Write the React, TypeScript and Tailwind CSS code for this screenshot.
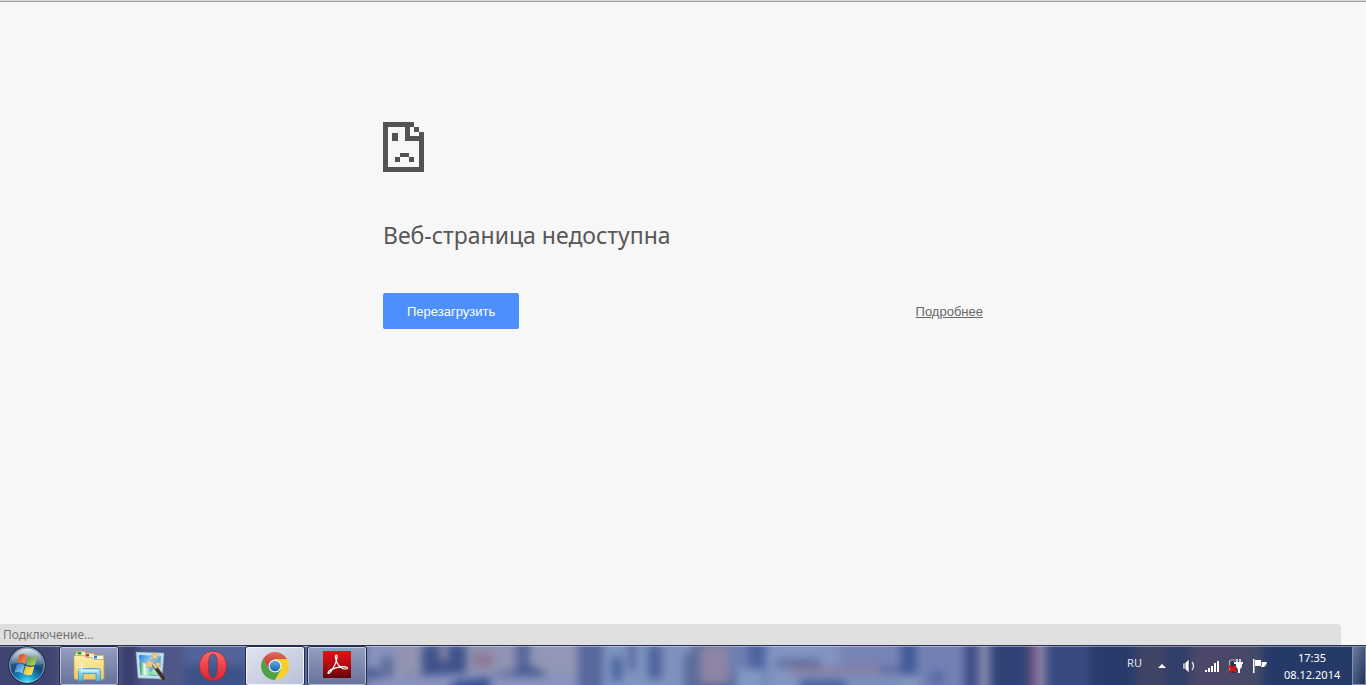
import React from 'react';

type Patch = [x: number, y: number, w: number, h: number, fill: string];

const patches: Patch[] = [
  [-20, -10, 80, 60, '#3f4470'], [118, -10, 70, 60, '#4f5789'], [118, -10, 20, 60, '#39406f'], [185, -10, 62, 30, '#53649a'],
  [185, 20, 62, 30, '#3c5289'], [366, -10, 40, 60, '#8793bd'], [366, 24, 14, 16, '#465790'], [382, 12, 10, 24, '#5b6798'],
  [395, -10, 30, 40, '#9293b0'], [422, 2, 44, 30, '#3e528b'], [440, -10, 8, 26, '#8f89a9'], [466, -10, 50, 40, '#9093b1'],
  [474, 8, 18, 14, '#8c7795'], [516, -10, 14, 40, '#57659b'], [530, -10, 48, 46, '#9297b5'],
  [603, -10, 60, 60, '#8094c0'], [612, 12, 10, 24, '#48649d'], [628, -10, 8, 36, '#5d6da2'], [648, 0, 14, 34, '#4f639d'],
  [663, -10, 30, 60, '#8091bf'], [684, 8, 14, 42, '#5d6b9d'], [700, 0, 30, 38, '#8f85a5'], [728, -10, 20, 36, '#6d7fb0'],
  [736, 24, 28, 26, '#8298c4'], [750, -10, 16, 34, '#4d65a0'], [766, -10, 92, 60, '#8294c1'], [776, 14, 44, 8, '#626f9d'],
  [790, 22, 90, 7, '#8a7c9d'], [800, 34, 46, 16, '#4f639d'], [840, -10, 60, 32, '#7783b5'], [850, 28, 50, 22, '#7d8dbb'],
  [902, -10, 14, 40, '#405b9a'], [916, -10, 48, 60, '#7480b4'], [900, 30, 20, 20, '#8597be'], [930, 26, 14, 14, '#5a6ba4'],
  [964, -10, 14, 60, '#414d88'], [978, -10, 12, 60, '#8087aa'], [991, -10, 38, 60, '#304276'], [1029, -10, 8, 60, '#70587f'],
  [1037, -10, 9, 60, '#8a86ad'], [1046, -10, 44, 60, '#394a80'], [1090, -10, 46, 60, '#283b6b'], [1136, -10, 30, 60, '#404467'],
  [1166, -10, 24, 60, '#303e69'], [1190, -10, 60, 60, '#4b4768'], [1238, -10, 25, 60, '#464966'], [1263, -10, 123, 60, '#263a68'],
];

function Wallpaper() {
  return (
    <svg aria-hidden="true" className="absolute inset-0 h-full w-full" viewBox="0 0 1366 40" preserveAspectRatio="none">
      <defs>
        <filter id="soft" x="-2%" y="-20%" width="104%" height="140%" colorInterpolationFilters="sRGB"><feGaussianBlur stdDeviation="4 4" /></filter>
      </defs>
      <g filter="url(#soft)">
        <rect x="-20" y="-10" width="1406" height="60" fill="#59689d" />
        {patches.map(([x, y, w, h, fill], i) => <rect key={i} x={x} y={y} width={w} height={h} fill={fill} />)}
        <path d="M366 34 450 29 480 28H578V50H366Z" fill="#8993be" />
        <path d="M444 50 455 36 490 32V50Z" fill="#38508f" />
        <path d="M490 31 535 22 548 31Z" fill="#43548f" />
      </g>
    </svg>
  );
}

function SadPage() {
  return (
    <svg width="41" height="50" viewBox="0 0 41 50" shapeRendering="crispEdges" aria-hidden="true">
      <path fill="#535353" fillRule="evenodd" d="M0 0H31V5H36V10H41V50H0ZM5 5V45H36V19H22V5ZM27 5V14H36V10H31V5ZM9 11H15V19H9ZM17 31H26V35H31V40H26V35H17V40H12V35H17Z" />
    </svg>
  );
}

function StartOrb() {
  return (
    <svg width="40" height="40" viewBox="0 0 40 40" aria-hidden="true">
      <defs>
        <radialGradient id="orb" cx=".5" cy=".98" r=".8">
          <stop offset="0" stopColor="#4cecff" /><stop offset=".3" stopColor="#1794c8" /><stop offset=".62" stopColor="#144a7b" /><stop offset="1" stopColor="#4d6583" />
        </radialGradient>
        <linearGradient id="orbShine" x2="0" y2="1"><stop stopColor="#fff" stopOpacity=".85" /><stop offset="1" stopColor="#b8d5ea" stopOpacity=".2" /></linearGradient>
        <linearGradient id="flagRed" x2="1" y2="1"><stop stopColor="#d0401c" /><stop offset="1" stopColor="#f8a05c" /></linearGradient>
        <linearGradient id="flagGreen" x2="1" y2="1"><stop stopColor="#5d9a2d" /><stop offset="1" stopColor="#c0dc69" /></linearGradient>
        <linearGradient id="flagBlue" x2="1" y2="1"><stop stopColor="#2770bd" /><stop offset="1" stopColor="#9edcff" /></linearGradient>
        <linearGradient id="flagYellow" x2="1" y2="1"><stop stopColor="#f0b51d" /><stop offset="1" stopColor="#ffed83" /></linearGradient>
      </defs>
      <circle cx="20" cy="19" r="18.3" fill="url(#orb)" stroke="#15243f" />
      <circle cx="20" cy="19" r="17.3" fill="none" stroke="#a9c7dc" strokeOpacity=".75" />
      <path d="M4 18a16 15.500 0 0 1 32 0C27 22 14 15 4 18Z" fill="url(#orbShine)" />
      <path d="M12.500 8.800c2.800-1.500 5.200-1 7.700.7L18 18c-2.800-1.800-5.200-2-7.900-.7Z" fill="url(#flagRed)" />
      <path d="M21.200 10.300c3 1.800 5.800 1.500 9.200.2l-2.600 8.400c-2.800 1.200-5.800 1-8.800-.4Z" fill="url(#flagGreen)" />
      <path d="M9.800 18.600c2.600-1.500 5-1.200 7.900.5L15.400 27.400c-2.700-1.700-5.200-1.900-8-.6Z" fill="url(#flagBlue)" />
      <path d="M18.700 19.700c3 1.600 5.800 1.600 8.800.4L25 28.400c-2.800 1.200-5.600 1-8.600-.6Z" fill="url(#flagYellow)" />
    </svg>
  );
}

function Explorer() {
  return (
    <svg width="34" height="32" viewBox="0 0 34 32" aria-hidden="true">
      <defs>
        <linearGradient id="folder" x2="0" y2="1"><stop stopColor="#fdf0ad" /><stop offset="1" stopColor="#e8cb66" /></linearGradient>
        <linearGradient id="stand" x2="0" y2="1"><stop stopColor="#b6e4f6" /><stop offset="1" stopColor="#58b0da" /></linearGradient>
      </defs>
      <path d="M4 2q0-1 1-1h8l1 2h8l1 2h8q1 0 1 1v22H3V5Z" fill="#edd98c" stroke="#ae9349" strokeWidth=".7" />
      <path d="M5 2h7l1 3H4Z" fill="#f7f7e7" /><path d="M5.500 2h4v2.500h-4Z" fill="#279b35" />
      <path d="M13 4h7l1 3h-8Z" fill="#f8f3e5" /><path d="M13.500 4h3.500v2.500h-3.500Z" fill="#b83c29" />
      <path d="M21 6h9l1 3H21Z" fill="#f8f8f0" /><path d="M22 6h3v2.500h-3Z" fill="#2a81d0" />
      <path d="M2 5.500h10l2 2h6l2 2h10v18q0 2-2 2H4q-2 0-2-2Z" fill="url(#folder)" stroke="#c0a24c" strokeWidth=".7" />
      <path d="M6.500 31V20.500q0-2 2-2h18q2 0 2 2V31H24v-7.500H11V31Z" fill="url(#stand)" stroke="#419bc5" strokeWidth=".8" />
      <path d="M9 21h17" stroke="#e5f9ff" />
      <path d="M9.500 12v11M4 17.500h11M6 14l7 7M13 14l-7 7" stroke="#fff" strokeOpacity=".65" strokeWidth=".8" />
    </svg>
  );
}

function MagicPhoto() {
  return (
    <svg width="32" height="32" viewBox="0 0 32 32" aria-hidden="true">
      <defs>
        <linearGradient id="photo" x2="1" y2=".7"><stop stopColor="#277bd8" /><stop offset=".45" stopColor="#8fcdf3" /><stop offset="1" stopColor="#258fd0" /></linearGradient>
        <linearGradient id="hill" x2="1"><stop stopColor="#238d52" /><stop offset=".4" stopColor="#e8fbf2" /><stop offset="1" stopColor="#5ac98e" /></linearGradient>
      </defs>
      <path d="M1 2 29 3 27 29 3 28Z" fill="#c4e0ed" stroke="#7aa3bd" strokeWidth=".6" />
      <path d="M4 5 26 6 24.500 26 5.500 25Z" fill="url(#photo)" />
      <path d="M4.600 13q8-3 12 13L5.500 25Z" fill="url(#hill)" />
      <path d="M15 24q4-9 10.500-8L24.500 26Z" fill="#a8e0ae" />
      <path d="m16 14 3-1 12 15q0 3-3 3Z" fill="#35302e" stroke="#8b7962" strokeWidth=".7" />
      <path d="m17 14 2-1 3.500 4.500-2 1.500Z" fill="#ded1b4" />
      <path d="m14.500 9 1.500 3 3.300.4-2.300 2.400.6 3.200-3.100-1.500-2.900 1.600.5-3.300-2.400-2.300 3.300-.5ZM20 2l1.200 2.500 2.800.4-2 2 .5 2.800L20 8.300l-2.400 1.400.4-2.800-2-2 2.800-.4ZM23 11l1 2 2.200.3-1.600 1.500.4 2.200-2-1-2 1 .4-2.200-1.600-1.500 2.200-.3Z" fill="#f2cb83" stroke="#c38f50" strokeWidth=".4" />
    </svg>
  );
}

function Opera() {
  return (
    <svg width="30" height="32" viewBox="0 0 30 32" aria-hidden="true">
      <defs><linearGradient id="opera" x2="0" y2="1"><stop stopColor="#f66f70" /><stop offset=".5" stopColor="#ed4148" /><stop offset="1" stopColor="#d5292f" /></linearGradient></defs>
      <path fillRule="evenodd" fill="url(#opera)" stroke="#b02b39" strokeWidth=".8" d="M15 1.500c8 0 13.500 6 13.500 14.500S23 30.500 15 30.500 1.500 24.500 1.500 16 7 1.500 15 1.500Zm0 2.500c-3.500 0-4.500 4.500-4.500 12s1 12 4.500 12 4.500-4.500 4.500-12-1-12-4.500-12Z" />
    </svg>
  );
}

function Chrome() {
  return (
    <svg width="30" height="30" viewBox="0 0 30 30" aria-hidden="true">
      <defs>
        <linearGradient id="red" x2="0" y2="1"><stop stopColor="#e0685c" /><stop offset="1" stopColor="#c22f28" /></linearGradient>
        <linearGradient id="blue" x2="0" y2="1"><stop stopColor="#62ace4" /><stop offset="1" stopColor="#1763af" /></linearGradient>
      </defs>
      <path d="M2.900 8A14 14 0 0 1 27.100 8H15L9 18.500Z" fill="url(#red)" />
      <path d="M2.900 8A14 14 0 0 0 15 29l6-10.500H9Z" fill="#4da345" />
      <path d="M15 8h12.100A14 14 0 0 1 15 29l6-10.500Z" fill="#f6cf2b" />
      <circle cx="15" cy="15" r="6.500" fill="#f1f3f3" /><circle cx="15" cy="15" r="5.300" fill="url(#blue)" />
    </svg>
  );
}

function Reader() {
  return (
    <svg width="28" height="27" viewBox="0 0 28 27" aria-hidden="true">
      <defs><linearGradient id="reader" x2="0" y2="1"><stop stopColor="#e80f14" /><stop offset=".5" stopColor="#b60b10" /><stop offset="1" stopColor="#5b070b" /></linearGradient></defs>
      <rect width="28" height="27" fill="url(#reader)" />
      <path d="M13.300 4c-1.600 0-.8 4.500.9 8 1.800 3.300 5.300 6 8.800 6 3.200-.2 1.500-2.700-4-2.300-5.500.4-14 3.300-14 6.300 1.500 1.700 5-4.500 7-8.500 1.800-3.800 2.800-9.500 1.300-9.500Z" fill="none" stroke="#fff" strokeWidth="1.200" />
    </svg>
  );
}

function Speaker() {
  return <svg width="14" height="16" viewBox="0 0 14 16" aria-hidden="true"><path d="M1 5h2l4-4v14l-4-4H1Z" fill="#fff" stroke="#202a45" strokeWidth=".6" /><path d="M3 5v6" stroke="#55607c" /><path d="M10 4q3 4 0 8" stroke="#e4e6ed" strokeWidth="1.300" fill="none" /></svg>;
}
function Signal() {
  return <svg width="16" height="14" viewBox="0 0 16 14" shapeRendering="crispEdges" aria-hidden="true"><path d="M1 11h2v2H1ZM4 9h2v4H4ZM7 7h2v6H7ZM10 4h2v9h-2ZM13 2h2v11h-2Z" fill="#fff" /></svg>;
}
function Power() {
  return <svg width="16" height="16" viewBox="0 0 16 16" aria-hidden="true"><path d="M1.500 14V4q0-2 2-2H8" fill="none" stroke="#a5abba" strokeWidth="1.200" /><path d="M3 4h5v11H3Z" fill="#28304a" /><path d="M9 1v4M12 1v4" stroke="#fff" strokeWidth="1.500" /><path d="M6 4h9v2h-1v2q0 2-2 3v4h-2v-4Q8 10 8 8V6H6Z" fill="#fff" /><path d="m1 8 7 6M8 8l-7 6" stroke="#e0101c" strokeWidth="2.800" /></svg>;
}
function Flag() {
  return <svg width="16" height="16" viewBox="0 0 16 16" aria-hidden="true"><path d="M1 1h1.500v14H1Z" fill="#fff" /><path d="M3 2h6v2h6l-1 3-2 2H9V8H3Z" fill="#fff" /><path d="M9.500 4v4" stroke="#77809a" /></svg>;
}

const appClass = 'flex h-10 w-[60px] items-center justify-center';
const openClass = 'flex h-10 w-[60px] items-center justify-center rounded-[3px] border border-[#242b46] bg-gradient-to-b from-[#a3acc9]/80 to-[#69759c]/80 shadow-[inset_0_0_0_1px_rgba(255,255,255,0.5)]';

function Taskbar() {
  return (
    <footer className="relative h-10 overflow-hidden">
      <Wallpaper />
      <div className="relative flex h-full items-center border-t border-[#2a3256] shadow-[inset_0_1px_0_rgba(255,255,255,0.4)]">
        <button aria-label="Пуск" className="flex w-[59px] pl-[7px]"><StartOrb /></button>
        <nav className="flex gap-[2px]">
          <button aria-label="Проводник" className={openClass}><Explorer /></button>
          <button aria-label="Фото" className={appClass}><MagicPhoto /></button>
          <button aria-label="Opera" className={appClass}><Opera /></button>
          <button aria-label="Chrome" className="flex h-10 w-[60px] items-center justify-center rounded-[3px] border border-[#242b46] bg-gradient-to-br from-[#e1e4ef] to-[#b9c1d9] shadow-[inset_0_0_0_1px_rgba(255,255,255,0.8)]"><Chrome /></button>
          <button aria-label="Adobe Reader" className="flex h-10 w-[60px] items-start justify-center rounded-[3px] border border-[#242b46] bg-gradient-to-b from-[#a3acc9]/80 to-[#69759c]/80 pt-1 shadow-[inset_0_0_0_1px_rgba(255,255,255,0.5)]"><Reader /></button>
        </nav>
        <div className="ml-auto flex h-full items-center font-['Noto_Sans',sans-serif] text-[11px] text-white">
          <span className="mr-4 pb-1 text-[#e2e5ef]">RU</span>
          <div className="flex items-center gap-2">
            <button aria-label="Скрытые значки" className="mr-2 flex"><svg width="8" height="5" viewBox="0 0 8 5" aria-hidden="true"><path d="M0 5 4 1l4 4Z" fill="#fff" /></svg></button>
            <button aria-label="Громкость"><Speaker /></button>
            <button aria-label="Сеть"><Signal /></button>
            <button aria-label="Питание"><Power /></button>
            <button aria-label="Уведомления"><Flag /></button>
          </div>
          <div className="ml-4 w-14 text-center leading-[17px]"><time className="block">17:35</time><time className="block">08.12.2014</time></div>
          <button aria-label="Показать рабочий стол" className="ml-3 h-full w-[14px] border border-[#8290ad] bg-gradient-to-br from-white/35 to-[#14284c]/40" />
        </div>
      </div>
    </footer>
  );
}

export default function App() {
  return (
    <div className="flex min-h-screen flex-col bg-[#f7f7f7]">
      <div className="h-[2px] border-b border-[#a0a0a0] bg-[#dcdcdc]" />
      <main className="mx-auto w-full max-w-[600px] flex-1 pt-[120px]">
        <SadPage />
        <h1 className="mt-12 font-['Noto_Sans',sans-serif] text-[23px] leading-[30px] text-[#585858]">Веб-страница недоступна</h1>
        <div className="mt-[43px] flex items-center justify-between font-['Liberation_Sans',sans-serif] text-[13px]">
          <button className="h-9 rounded-[2px] bg-[#4c8ffb] px-6 pt-[2px] text-white">Перезагрузить</button>
          <a href="#details" className="pt-[2px] text-[#696969] underline">Подробнее</a>
        </div>
      </main>
      <div role="status" className="mr-[25px] h-[21px] rounded-tr bg-[#dfdfdf] px-[3px] font-['Noto_Sans',sans-serif] text-xs leading-[21px] text-[#747474]">Подключение...</div>
      <Taskbar />
    </div>
  );
}
